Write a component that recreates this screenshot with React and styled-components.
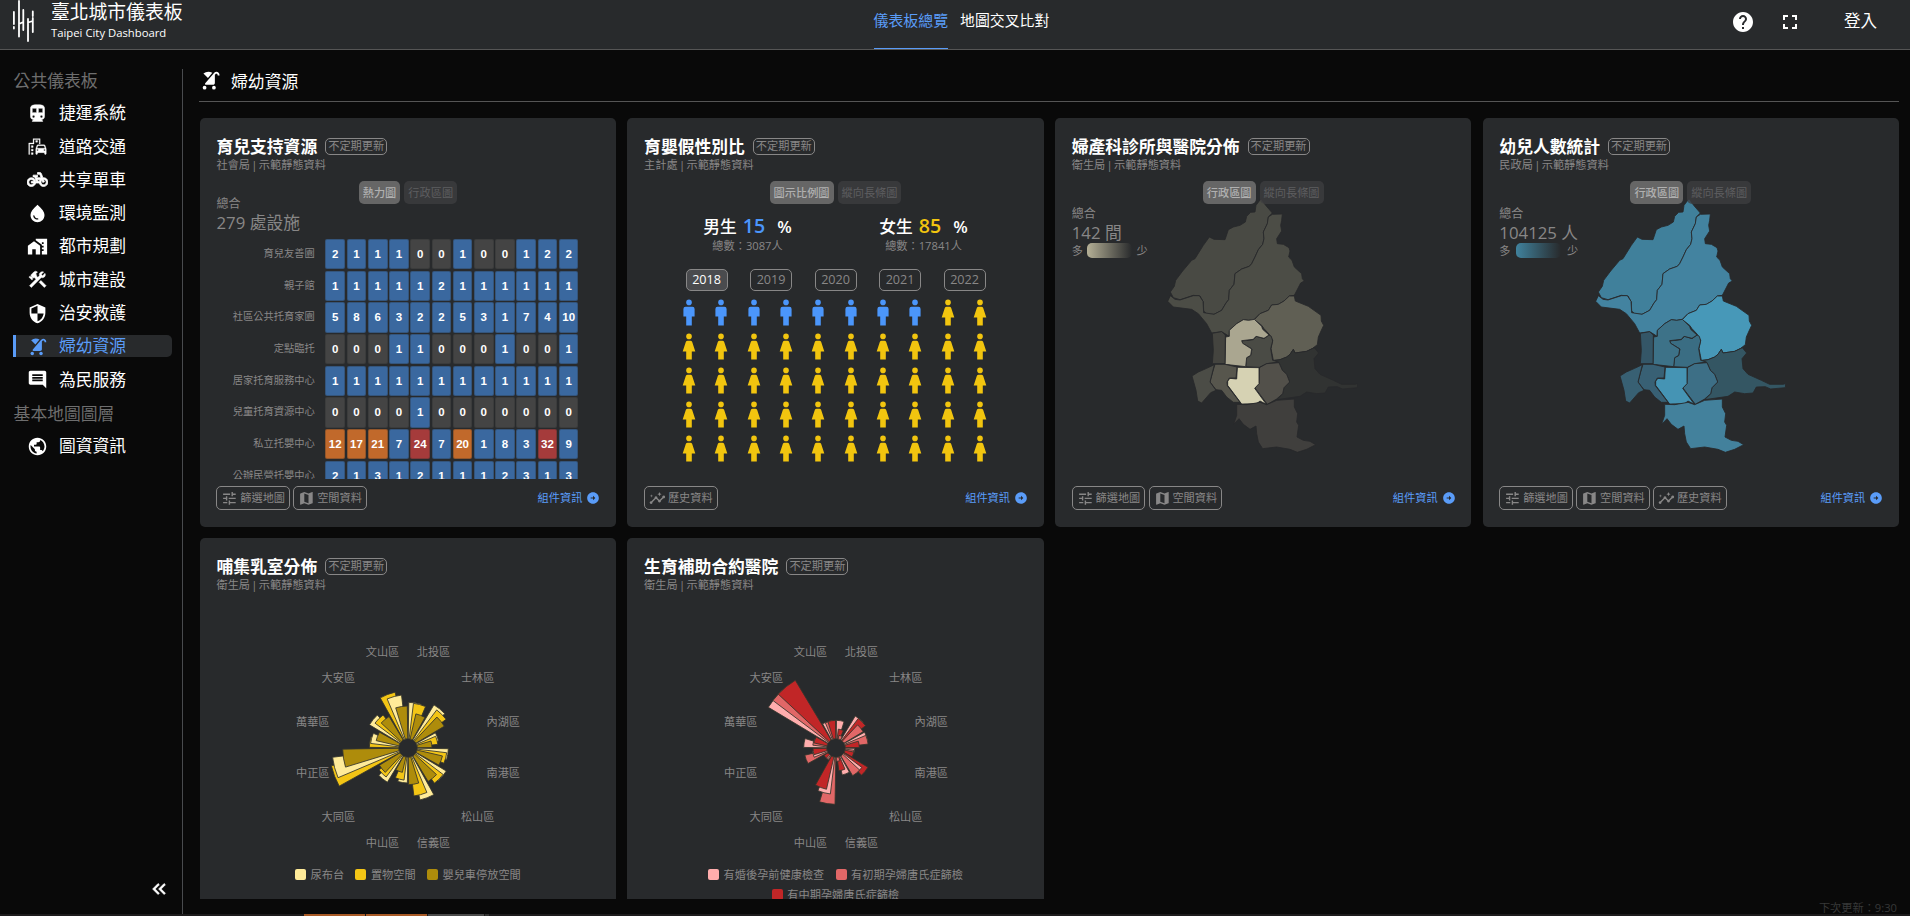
import React from "react";
import styled, { createGlobalStyle } from "styled-components";
import {
  MdDirectionsSubway, MdEmojiTransportation, MdPedalBike, MdWaterDrop, MdMapsHomeWork,
  MdConstruction, MdSecurity, MdStroller, MdComment, MdPublic, MdTune, MdMap, MdInsights,
  MdArrowCircleRight, MdKeyboardDoubleArrowLeft, MdHelp, MdFullscreen,
} from "react-icons/md";

const GlobalStyle = createGlobalStyle`
  * { box-sizing: border-box; }
  body {
    margin: 0;
    background: #090909;
    color: #fff;
    font-family: "Open Sans", "Noto Sans CJK TC", sans-serif;
    font-size: 14px;
    overflow: hidden;
  }
  svg { flex: none; display: block; }
`;

const C = { panel: "#282a2c", line: "#494b4e", muted: "#888787", blue: "#5a9cf8" };

const Page = styled.div`
  height: 916px;
  display: flex;
  flex-direction: column;
  overflow: hidden;
`;

const TopBar = styled.header`
  height: 50px;
  flex: none;
  background: ${C.panel};
  border-bottom: 1px solid #555;
  display: grid;
  grid-template-columns: 1fr auto 1fr;
  padding-right: 33px;
`;

const Brand = styled.div`
  display: flex;
  gap: 15px;
  padding-left: 12px;
`;

const BrandText = styled.div`
  display: flex;
  flex-direction: column;
`;

const BrandTitle = styled.div`
  font-size: 18.8px;
  line-height: 25px;
`;

const BrandSub = styled.div`
  font-size: 11.3px;
  line-height: 15px;
`;

const Nav = styled.nav`
  display: flex;
  gap: 12px;
  padding-left: 46px;
`;

const NavItem = styled.a`
  height: 49px;
  font-size: 14.9px;
  line-height: 40px;
  color: ${(p) => (p.$active ? C.blue : "#fff")};
  border-bottom: 1px solid ${(p) => (p.$active ? C.blue : "transparent")};
`;

const UserArea = styled.div`
  display: flex;
  justify-content: flex-end;
  height: 43px;
  align-items: center;
  gap: 23px;
`;

const Login = styled.span`
  font-size: 16.5px;
  line-height: 24px;
  padding: 0 0 1px 19px;
`;

const Body = styled.div`
  flex: none;
  height: 864px;
  display: flex;
  padding: 19px 11px 0 0;
`;

const Sidebar = styled.aside`
  width: 183px;
  flex: none;
  border-right: 1px solid ${C.line};
  padding-left: 13px;
  display: flex;
  flex-direction: column;
`;

const SideHeading = styled.div`
  height: 22px;
  line-height: 23px;
  margin-bottom: 11.3px;
  padding-left: 0.6px;
  font-size: 16.8px;
  color: #6e6e6e;
`;

const SideItem = styled.a`
  display: flex;
  align-items: center;
  gap: 11px;
  width: 159px;
  height: 22px;
  margin-bottom: 11.3px;
  padding-left: 11px;
  border-left: 3px solid ${(p) => (p.$active ? C.blue : "transparent")};
  border-radius: 0 5px 5px 0;
  background: ${(p) => (p.$active ? C.panel : "transparent")};
  color: ${(p) => (p.$active ? C.blue : "#fff")};
  font-size: 16.8px;
  line-height: 22px;

  path:not([fill="none"]) {
    stroke: currentColor;
    stroke-width: ${(p) => p.$bold || 0};
  }
`;

const Collapse = styled.div`
  margin-top: auto;
  padding: 0 12px 14px 0;
  display: flex;
  justify-content: flex-end;

  path:not([fill="none"]) {
    stroke: #fff;
    stroke-width: 0.7;
  }
`;

const Main = styled.main`
  flex: 1;
  padding-left: 16.7px;
  display: flex;
  flex-direction: column;
`;

const MainHead = styled.div`
  height: 33px;
  flex: none;
  border-bottom: 1px solid #555;
  display: flex;
  gap: 10px;
  margin-left: -1px;
  padding-left: 0;
  font-size: 16.8px;
  line-height: 25px;
`;

const Cards = styled.div`
  margin-top: 16px;
  height: 781px;
  flex: none;
  overflow: hidden;
  display: grid;
  grid-template-columns: repeat(4, 1fr);
  grid-auto-rows: 409px;
  gap: 11.2px;
`;

const Footer = styled.div`
  height: 15px;
  line-height: 18px;
  padding-right: 2px;
  text-align: right;
  font-size: 11.2px;
  color: #373838;
`;

const CardBox = styled.section`
  background: ${C.panel};
  border-radius: 5px;
  padding: 16.8px;
  display: flex;
  flex-direction: column;
  min-width: 0;
`;

const TitleRow = styled.div`
  display: flex;
  align-items: center;
  gap: 8px;
  height: 24px;
  flex: none;
`;

const Title = styled.h3`
  margin: 0;
  font-size: 16.8px;
  line-height: 24px;
  font-weight: 700;
`;

const Badge = styled.span`
  height: 17px;
  line-height: 14px;
  padding: 0 2px;
  border: 1px solid ${C.muted};
  border-radius: 5px;
  font-size: 11.2px;
  color: ${C.muted};
`;

const Source = styled.div`
  font-size: 11.2px;
  line-height: 12.5px;
  height: 14px;
  word-spacing: -1.6px;
  flex: none;
  color: ${C.muted};
`;

const Tabs = styled.div`
  position: relative;
  z-index: 1;
  display: flex;
  justify-content: center;
  gap: 4px;
  height: 23px;
  margin-top: 8px;
  flex: none;
`;

const Tab = styled.span`
  height: 23px;
  line-height: 23px;
  padding: 0 4px;
  border-radius: 5px;
  font-size: 11.2px;
  font-weight: ${(p) => (p.$active ? 500 : 400)};
  background: ${(p) => (p.$active ? "#666" : "rgba(62,62,64,.78)")};
  color: ${(p) => (p.$active ? "#b0b0b0" : "#5e5e60")};
`;

const Chart = styled.div`
  height: 275px;
  flex: none;
  overflow: hidden;
`;

const HeatChart = styled(Chart)`
  margin-top: -9px;
  height: 284px;
`;

const CardFoot = styled.div`
  margin-top: auto;
  display: flex;
  align-items: center;
  gap: 3.3px;
  height: 24px;
  margin-right: -1px;
`;

const FootButton = styled.span`
  display: flex;
  align-items: center;
  gap: 2px;
  height: 24px;
  padding: 0 4px;
  border: 1px solid ${C.muted};
  border-radius: 5px;
  font-size: 11.2px;
  line-height: 22px;
  color: ${C.muted};
`;

const InfoLink = styled.a`
  margin-left: auto;
  display: flex;
  align-items: center;
  gap: 4px;
  font-size: 11.2px;
  line-height: 22px;
  color: ${C.blue};
`;

const Total = styled.div`
  display: flex;
  flex-direction: column;
  width: max-content;
  color: ${C.muted};
`;

const TotalLabel = styled.span`
  font-size: 12px;
  line-height: 18px;
`;

const TotalValue = styled.span`
  font-size: 16.8px;
  line-height: 20px;
`;

const Heat = styled.div`
  margin-top: 6.2px;
  display: flex;
  flex-direction: column;
`;

const HeatRow = styled.div`
  height: 31.67px;
  display: flex;
  flex: none;
`;

const HeatLabel = styled.span`
  width: 98.4px;
  margin-right: 10.6px;
  text-align: right;
  font-size: 10.25px;
  line-height: 28px;
  color: ${C.muted};
`;

const heatColors = { blue: "#3a689f", grey: "#444", orange: "#c1692b", red: "#a53b3b" };
const tone = (v) => (v === 0 ? "grey" : v < 12 ? "blue" : v < 24 ? "orange" : "red");

const HeatCell = styled.span`
  width: 19.6px;
  height: 30.4px;
  margin-right: 1.64px;
  border-radius: 2px;
  border: 1px solid rgba(40, 42, 44, 0.3);
  background: ${(p) => heatColors[p.$tone]};
  font: 700 11.5px/29px "Liberation Sans", sans-serif;
  display: flex;
  justify-content: center;
`;

const GenderRow = styled.div`
  display: flex;
  justify-content: center;
  margin-top: 9.5px;
`;

const Gender = styled.div`
  width: 176px;
  display: flex;
  flex-direction: column;
  align-items: center;
`;

const GenderLine = styled.div`
  display: flex;
  align-items: baseline;
  font-size: 16.8px;
  line-height: 26px;
  font-weight: 500;
  height: 26px;
`;

const Percent = styled.span`
  margin: 0 12px 0 6px;
  font-size: 19.6px;
  font-weight: 600;
  color: ${(p) => p.$color};
`;

const PercentSign = styled.span`
  font-weight: 600;
`;

const GenderSum = styled.div`
  font-size: 11.2px;
  line-height: 14px;
  color: ${C.muted};
`;

const Years = styled.div`
  display: flex;
  justify-content: center;
  gap: 22.5px;
  margin-top: 15.5px;
`;

const Year = styled.span`
  width: 42px;
  height: 22px;
  border: 1px solid ${C.muted};
  border-radius: 5px;
  font-size: 12.6px;
  line-height: 20px;
  text-align: center;
  background: ${(p) => (p.$active ? "#4a4b4e" : "transparent")};
  color: ${(p) => (p.$active ? "#fff" : C.muted)};
`;

const People = styled.div`
  display: grid;
  grid-template-columns: repeat(10, 32.3px);
  grid-auto-rows: 33.85px;
  justify-content: center;
  justify-items: center;
  align-items: center;
  margin: 5px 2px 0 0;
`;

const MapChart = styled(Chart)`
  margin-top: -6px;
  height: 281px;
  display: grid;
  > * { grid-area: 1 / 1; }
`;

const MapTotal = styled(Total)`
  margin-top: 7px;
  align-self: start;
`;

const MapArt = styled.svg`
  justify-self: center;
`;

const Scale = styled.div`
  display: flex;
  justify-content: space-between;
  align-items: center;
  gap: 4.3px;
  height: 15px;
  font-size: 11.2px;
  line-height: 15px;
`;

const ScaleBar = styled.span`
  width: 45px;
  height: 15px;
  border-radius: 5px;
  background: linear-gradient(to right, ${(p) => p.$color}, ${C.panel});
`;

const RoseArt = styled.svg`
  align-self: center;
  margin-top: 47px;
  font-size: 11.2px;
  fill: ${C.muted};
`;

const Legend = styled.div`
  display: flex;
  flex-wrap: wrap;
  justify-content: center;
  column-gap: 11.3px;
  margin-top: 9px;
`;

const LegendItem = styled.span`
  display: flex;
  align-items: center;
  gap: 4.5px;
  height: 19.4px;
  font-size: 11.2px;
  line-height: 19px;
  color: ${C.muted};
`;

const Swatch = styled.i`
  width: 11px;
  height: 11px;
  border-radius: 2px;
  background: ${(p) => p.$color};
`;

const BottomStrip = styled.div`
  height: 2px;
  flex: none;
  display: flex;
  gap: 1px;
  padding-left: 304px;
  background: #1d1b1c;
`;

const StripBlock = styled.span`
  width: ${(p) => p.$w}px;
  background: ${(p) => p.$color};
`;

const menu = [
  ["捷運系統", MdDirectionsSubway, 0.6], ["道路交通", MdEmojiTransportation, 0.4], ["共享單車", MdPedalBike, 0.9],
  ["環境監測", MdWaterDrop], ["都市規劃", MdMapsHomeWork], ["城市建設", MdConstruction, 0.5],
  ["治安救護", MdSecurity], ["婦幼資源", MdStroller], ["為民服務", MdComment],
];

const heat = [
  ["育兒友善園", [2, 1, 1, 1, 0, 0, 1, 0, 0, 1, 2, 2]],
  ["親子館", [1, 1, 1, 1, 1, 2, 1, 1, 1, 1, 1, 1]],
  ["社區公共托育家園", [5, 8, 6, 3, 2, 2, 5, 3, 1, 7, 4, 10]],
  ["定點臨托", [0, 0, 0, 1, 1, 0, 0, 0, 1, 0, 0, 1]],
  ["居家托育服務中心", [1, 1, 1, 1, 1, 1, 1, 1, 1, 1, 1, 1]],
  ["兒童托育資源中心", [0, 0, 0, 0, 1, 0, 0, 0, 0, 0, 0, 0]],
  ["私立托嬰中心", [12, 17, 21, 7, 24, 7, 20, 1, 8, 3, 32, 9]],
  ["公辦民營托嬰中心", [2, 1, 3, 1, 2, 1, 1, 1, 2, 3, 1, 3]],
];

// District outlines: Beitou, Shilin, Neihu, Nangang, Songshan, Zhongshan, Datong,
// Xinyi, Da'an, Zhongzheng, Wanhua, Wenshan.
const districts = [
  "603,265 617,285 637,308 625,320 622,340 610,365 612,385 608,402 595,418 585,440 575,460 568,468 545,476 525,490 522,522 508,540 506,568 498,578 485,600 462,612 440,610 431,602 430,575 420,557 400,555 360,568 340,562 331,545 343,528 347,510 368,482 395,450 405,445 430,405 448,380 462,387 495,388 505,358 520,350 540,345 556,335 560,318 572,306 585,305 588,285",
  "625,320 637,312 667,311 665,330 662,345 665,362 650,385 652,400 670,402 687,412 690,422 686,440 696,450 703,470 725,490 727,505 733,512 722,518 703,555 688,557 672,572 655,582 635,584 625,600 600,610 583,627 566,630 550,628 530,640 508,660 507,678 498,672 485,664 455,668 440,640 415,610 395,597 340,590 323,573 331,556 345,567 360,569 400,556 418,556 429,573 431,607 462,612 485,600 498,578 506,568 508,540 522,522 525,490 545,476 568,468 575,460 585,440 595,418 608,402 612,385 610,365 622,340",
  "688,557 703,557 706,572 745,588 783,615 784,632 791,645 783,662 775,680 772,703 758,714 740,723 705,728 700,717 690,732 680,740 660,748 640,750 637,735 633,715 638,690 628,672 612,655 605,645 583,628 600,610 625,600 635,584 655,582 672,572",
  "640,751 660,748 680,740 690,732 700,717 705,728 740,723 763,712 776,728 762,745 765,775 780,792 820,810 845,822 885,822 893,820 892,832 848,836 832,829 805,830 795,848 770,850 740,845 720,858 650,868 668,850 672,832 689,815 680,792 667,780 657,757",
  "545,692 580,688 590,678 612,685 627,674 634,678 638,692 632,715 638,750 655,755 620,760 598,771 557,769 560,742 572,736 576,716 548,699",
  "550,628 566,630 583,627 605,648 608,657 627,674 612,684 588,678 580,687 545,691 548,699 575,716 572,735 560,742 557,769 495,762 497,680 508,678 508,660 530,640",
  "457,669 485,664 496,674 495,760 457,760 460,720",
  "598,772 620,760 657,757 667,780 680,792 689,815 672,832 668,850 650,866 622,882 585,833 597,820",
  "532,771 597,772 597,820 584,834 619,882 600,872 590,880 545,881 503,825 503,812 510,804 530,806",
  "465,762 495,762 531,770 528,803 508,803 501,815 502,826 540,876 520,876 500,860 485,840 468,838 450,815 458,785",
  "396,797 415,785 440,774 463,763 450,815 468,840 452,847 425,878 413,872 408,840",
  "530,882 560,883 600,876 620,883 650,870 703,866 703,890 713,910 710,935 716,945 711,980 730,990 750,993 767,1003 740,1017 712,1026 690,1017 650,1010 608,1015 595,995 590,970 588,947 570,957 550,942 537,925 521,942 530,915",
];

const sand = ["#494a44", "#4c4d46", "#605f54", "#313332", "#4a4b45", "#aaa690", "#44443f", "#52504a", "#d6d2b3", "#57564d", "#4b4c46", "#403f3d"];
const teal = ["#40809b", "#4383a0", "#4798b8", "#345663", "#3a6d83", "#3d7288", "#345667", "#3d6f86", "#4594b4", "#386074", "#386073", "#43819c"];

const roseLabels = ["北投區", "士林區", "內湖區", "南港區", "松山區", "信義區", "中山區", "大同區", "中正區", "萬華區", "大安區", "文山區"];
const yellows = { a: "#ffeb99", b: "#f3c515", c: "#ae8c0b" };
const reds = { a: "#ffadad", b: "#e16767", c: "#c12627" };

const roseYellow = [
  "a137 b135 c105", "a151 b143 c127", "a94 b90 c72", "a121 b117 c106", "a134 b132 c117", "a160 b145 c110",
  "a105 b97 c75", "a120 b109 c100", "b236 a228 c196", "b116 a113 c98", "a135 b124 c110", "b172 a160 c126",
];
const roseRed = [
  "a83 c57 b39", "a112 c111 b95", "a98 b97 c70", "a56 b54 c55", "c112 a97 b97", "a83 c69 b40",
  "b169 a139 c127", "b42 a41 c42", "b96 a71 c69", "a97 b70 c68", "a237 b237 c237", "a83 b82 c83",
];

function sector(from, to, r) {
  const pt = (deg, rad) => {
    const t = (deg * Math.PI) / 180;
    return `${(rad * Math.sin(t)).toFixed(2)} ${(-rad * Math.cos(t)).toFixed(2)}`;
  };
  const inner = 28;
  return `M${pt(from, inner)}L${pt(from, r)}A${r} ${r} 0 0 1 ${pt(to, r)}L${pt(to, inner)}A${inner} ${inner} 0 0 0 ${pt(from, inner)}Z`;
}

function Rose({ data, colors }) {
  return (
    <RoseArt width="260" height="216" viewBox="-130 -108 260 216">
      <g transform="scale(0.3333)" stroke="#35352c" strokeWidth="2.6">
        {data.map((group, g) =>
          group.split(" ").map((item, i) => {
            const from = g * 30 + 1 + i * 6;
            return <path key={g + item} d={sector(from, from + 16, Number(item.slice(1)))} fill={colors[item[0]]} />;
          })
        )}
      </g>
      {roseLabels.map((name, i) => {
        const t = ((15 + i * 30) * Math.PI) / 180;
        return (
          <text key={name} x={98.6 * Math.sin(t)} y={-98.6 * Math.cos(t) + 3.6} textAnchor="middle">{name}</text>
        );
      })}
    </RoseArt>
  );
}

function RoseLegend({ items, colors }) {
  return (
    <Legend>
      {items.map((name, i) => (
        <LegendItem key={name}><Swatch $color={colors["abc"[i]]} />{name}</LegendItem>
      ))}
    </Legend>
  );
}

function DistrictMap({ fills, value, color }) {
  return (
    <MapChart>
      <MapArt width="192" height="255" viewBox="321 263 576 765">
        {districts.map((pts, i) => (
          <polygon key={i} points={pts} fill={fills[i]} stroke="#27292b" strokeWidth="2.6" strokeLinejoin="round" />
        ))}
      </MapArt>
      <MapTotal>
        <TotalLabel>總合</TotalLabel>
        <TotalValue>{value}</TotalValue>
        <Scale>多<ScaleBar $color={color} />少</Scale>
      </MapTotal>
    </MapChart>
  );
}

function Person({ male }) {
  return (
    <svg width="14" height="27" viewBox="-7 -13.5 14 27" fill={male ? "#4b96fb" : "#f2c50f"}>
      <circle cx="0" cy="-10.1" r="2.8" />
      {male ? (
        <path d="M-3.4-5.8H3.4Q5.6-5.8 5.6-3.6V4H2.8V13H-2.8V4H-5.6V-3.6Q-5.6-5.8-3.4-5.8Z" />
      ) : (
        <path d="M-1.4-5.8H1.4Q2.7-5.8 3.2-4.5L6.3 5H2.8V13H-2.8V5H-6.3L-3.2-4.5Q-2.7-5.8-1.4-5.8Z" />
      )}
    </svg>
  );
}

function Card({ title, dept, tabs, actions, children }) {
  return (
    <CardBox>
      <TitleRow><Title>{title}</Title><Badge>不定期更新</Badge></TitleRow>
      <Source>{dept} | 示範靜態資料</Source>
      {tabs && <Tabs>{tabs.map((t, i) => <Tab key={t} $active={i === 0}>{t}</Tab>)}</Tabs>}
      {children}
      {actions && (
        <CardFoot>
          {actions.includes("f") && <FootButton><MdTune size={16.8} />篩選地圖</FootButton>}
          {actions.includes("m") && <FootButton><MdMap size={16.8} />空間資料</FootButton>}
          {actions.includes("h") && <FootButton><MdInsights size={16.8} />歷史資料</FootButton>}
          <InfoLink>組件資訊<MdArrowCircleRight size={14} /></InfoLink>
        </CardFoot>
      )}
    </CardBox>
  );
}

function Logo() {
  return (
    <svg width="24" height="43" viewBox="0 0 24 43" stroke="#fff" strokeWidth="1.8" fill="none" strokeLinecap="round">
      <path d="M1.9 12V24M1.9 27V28.5M7 1V36.5M7 24L11.3 22M11.3 10V30M16 19V41M16 22.5L20.8 21M20.8 11.5V16M20.8 18V32" />
    </svg>
  );
}

export default function App() {
  return (
    <Page>
      <GlobalStyle />
      <TopBar>
        <Brand>
          <Logo />
          <BrandText>
            <BrandTitle>臺北城市儀表板</BrandTitle>
            <BrandSub>Taipei City Dashboard</BrandSub>
          </BrandText>
        </Brand>
        <Nav>
          <NavItem $active>儀表板總覽</NavItem>
          <NavItem>地圖交叉比對</NavItem>
        </Nav>
        <UserArea>
          <MdHelp size={24} />
          <MdFullscreen size={24} />
          <Login>登入</Login>
        </UserArea>
      </TopBar>
      <Body>
        <Sidebar>
          <SideHeading>公共儀表板</SideHeading>
          {menu.map(([name, Icon, bold]) => (
            <SideItem key={name} $active={name === "婦幼資源"} $bold={bold}><Icon size={21} />{name}</SideItem>
          ))}
          <SideHeading>基本地圖圖層</SideHeading>
          <SideItem><MdPublic size={21} />圖資資訊</SideItem>
          <Collapse><MdKeyboardDoubleArrowLeft size={22} /></Collapse>
        </Sidebar>
        <Main>
          <MainHead><MdStroller size={22.4} />婦幼資源</MainHead>
          <Cards>
            <Card title="育兒支持資源" dept="社會局" tabs={["熱力圖", "行政區圖"]} actions="fm">
              <HeatChart>
                <Total>
                  <TotalLabel>總合</TotalLabel>
                  <TotalValue>279 處設施</TotalValue>
                </Total>
                <Heat>
                  {heat.map(([name, values]) => (
                    <HeatRow key={name}>
                      <HeatLabel>{name}</HeatLabel>
                      {values.map((v, i) => <HeatCell key={i} $tone={tone(v)}>{v}</HeatCell>)}
                    </HeatRow>
                  ))}
                </Heat>
              </HeatChart>
            </Card>
            <Card title="育嬰假性別比" dept="主計處" tabs={["圖示比例圖", "縱向長條圖"]} actions="h">
              <Chart>
                <GenderRow>
                  <Gender>
                    <GenderLine>男生<Percent $color="#4b96fb">15</Percent><PercentSign>%</PercentSign></GenderLine>
                    <GenderSum>總數：3087人</GenderSum>
                  </Gender>
                  <Gender>
                    <GenderLine>女生<Percent $color="#f2c50f">85</Percent><PercentSign>%</PercentSign></GenderLine>
                    <GenderSum>總數：17841人</GenderSum>
                  </Gender>
                </GenderRow>
                <Years>
                  {[2018, 2019, 2020, 2021, 2022].map((y) => <Year key={y} $active={y === 2018}>{y}</Year>)}
                </Years>
                <People>
                  {Array.from({ length: 50 }, (_, i) => <Person key={i} male={i < 8} />)}
                </People>
              </Chart>
            </Card>
            <Card title="婦產科診所與醫院分佈" dept="衛生局" tabs={["行政區圖", "縱向長條圖"]} actions="fm">
              <DistrictMap fills={sand} value="142 間" color="#b5b096" />
            </Card>
            <Card title="幼兒人數統計" dept="民政局" tabs={["行政區圖", "縱向長條圖"]} actions="fmh">
              <DistrictMap fills={teal} value="104125 人" color="#40829d" />
            </Card>
            <Card title="哺集乳室分佈" dept="衛生局">
              <Rose data={roseYellow} colors={yellows} />
              <RoseLegend items={["尿布台", "置物空間", "嬰兒車停放空間"]} colors={yellows} />
            </Card>
            <Card title="生育補助合約醫院" dept="衛生局">
              <Rose data={roseRed} colors={reds} />
              <RoseLegend items={["有婚後孕前健康檢查", "有初期孕婦唐氏症篩檢", "有中期孕婦唐氏症篩檢"]} colors={reds} />
            </Card>
          </Cards>
          <Footer>下次更新：9:30</Footer>
        </Main>
      </Body>
      <BottomStrip>
        <StripBlock $w={61} $color="#a85a26" />
        <StripBlock $w={61} $color="#a85a26" />
        <StripBlock $w={56} $color="#4a4a4a" />
        <StripBlock $w={4} $color="#333" />
      </BottomStrip>
    </Page>
  );
}
